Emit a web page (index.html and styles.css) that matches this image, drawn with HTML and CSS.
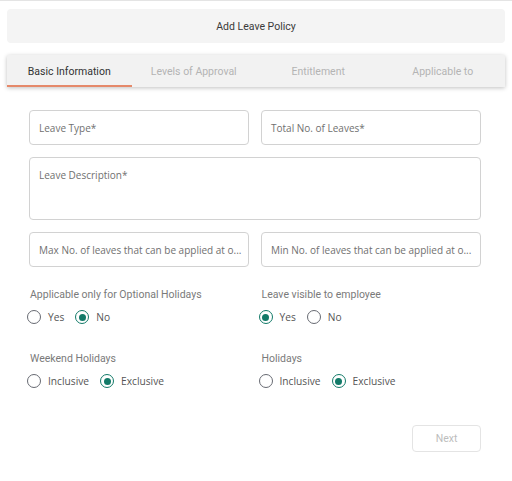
FILE: index.html
```html
<!DOCTYPE html>
<html>
<head>
<meta charset="utf-8">
<link rel="stylesheet" href="styles.css">
</head>
<body>
<div class="page">
  <div class="header">Add Leave Policy</div>
  <div class="tabs">
    <div class="tab active">Basic Information</div>
    <div class="tab">Levels of Approval</div>
    <div class="tab">Entitlement</div>
    <div class="tab">Applicable to</div>
  </div>
  <div class="form">
    <div class="grid">
      <div class="field">Leave Type*</div>
      <div class="field">Total No. of Leaves*</div>
      <div class="field wide">Leave Description*</div>
      <div class="field">Max No. of leaves that can be applied at o...</div>
      <div class="field">Min No. of leaves that can be applied at o...</div>
    </div>
    <div class="options">
      <div class="group">
        <div class="label">Applicable only for Optional Holidays</div>
        <div class="radios">
          <span class="radio"></span><span class="opt">Yes</span>
          <span class="radio on"></span><span class="opt">No</span>
        </div>
      </div>
      <div class="group">
        <div class="label">Leave visible to employee</div>
        <div class="radios">
          <span class="radio on"></span><span class="opt">Yes</span>
          <span class="radio"></span><span class="opt">No</span>
        </div>
      </div>
      <div class="group">
        <div class="label">Weekend Holidays</div>
        <div class="radios">
          <span class="radio"></span><span class="opt">Inclusive</span>
          <span class="radio on"></span><span class="opt">Exclusive</span>
        </div>
      </div>
      <div class="group">
        <div class="label">Holidays</div>
        <div class="radios">
          <span class="radio"></span><span class="opt">Inclusive</span>
          <span class="radio on"></span><span class="opt">Exclusive</span>
        </div>
      </div>
    </div>
    <div class="actions">
      <button class="next">Next</button>
    </div>
  </div>
</div>
</body>
</html>
```

FILE: styles.css
```css
* { box-sizing: border-box; }
html, body { margin: 0; padding: 0; background: #fff; }
body {
  font-family: Roboto, Inter, "Noto Sans", sans-serif;
  width: 512px;
  height: 481px;
  overflow: hidden;
  border-top: 1px solid #e4e4e4;
}
.page { padding: 8px 7px 0 7px; }
.header {
  height: 34px;
  background: #f4f4f4;
  border-radius: 4px;
  display: flex;
  align-items: center;
  justify-content: center;
  font-size: 10.5px;
  color: #3a3a3a;
  padding-top: 1px;
}
.tabs {
  margin-top: 12px;
  height: 32px;
  background: #f2f2f2;
  display: flex;
  box-shadow: 0 1px 4px rgba(0,0,0,0.25);
  border-radius: 2px 2px 0 0;
}
.tab {
  flex: 1;
  display: flex;
  align-items: center;
  justify-content: center;
  font-size: 10.5px;
  color: #b4b4b4;
  border-bottom: 2px solid transparent;
  padding-top: 3px;
}
.tab.active {
  color: #333;
  border-bottom-color: #e5896a;
}
.form { padding: 23px 24px 0 22px; }
.grid {
  display: grid;
  grid-template-columns: 1fr 1fr;
  gap: 12px;
}
.field {
  height: 35px;
  border: 1px solid #d2d2d2;
  border-radius: 4px;
  padding: 0 9px;
  display: flex;
  align-items: center;
  font-family: "Open Sans", "Noto Sans", sans-serif;
  font-size: 10px;
  color: #707070;
  white-space: nowrap;
  overflow: hidden;
}
.field.wide {
  grid-column: 1 / 3;
  height: 63px;
  align-items: flex-start;
  padding-top: 10px;
}
.options {
  display: grid;
  grid-template-columns: 1fr 1fr;
  column-gap: 12px;
  row-gap: 27px;
  margin-top: 21px;
  padding-left: 1px;
}
.label {
  font-size: 10.5px;
  color: #7a7a7a;
  line-height: 14px;
}
.radios {
  display: flex;
  align-items: center;
  margin-top: 7px;
  height: 16px;
}
.radio {
  width: 14px;
  height: 14px;
  border: 1.5px solid #676a72;
  border-radius: 50%;
  margin-left: -3px;
  margin-right: 7px;
  display: inline-flex;
  align-items: center;
  justify-content: center;
}
.radio.on { border-color: #127a68; }
.radio.on::after {
  content: "";
  width: 7px;
  height: 7px;
  border-radius: 50%;
  background: #127a68;
}
.opt {
  font-family: "Open Sans", "Noto Sans", sans-serif;
  font-size: 10.2px;
  color: #555;
  margin-right: 11px;
}
.radio + .opt + .radio { margin-left: 0; }
.actions {
  display: flex;
  justify-content: flex-end;
  margin-top: 36px;
}
.next {
  width: 69px;
  height: 27px;
  border: 1px solid #e4e4e4;
  border-radius: 4px;
  background: #fff;
  font-family: Roboto, Inter, sans-serif;
  font-size: 10.5px;
  color: #bdbdbd;
}
```
